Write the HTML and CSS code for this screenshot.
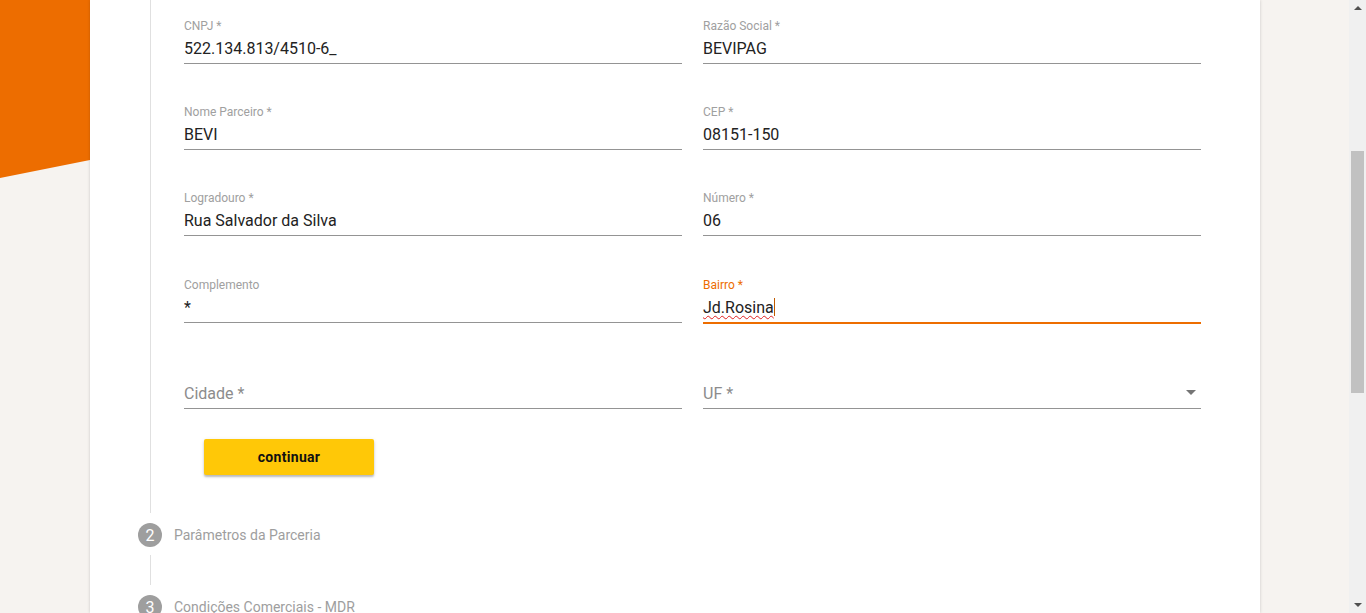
FILE: index.html
```html
<!DOCTYPE html>
<html lang="pt-BR">
<head>
<meta charset="utf-8">
<title>Cadastro de Parceiro</title>
<link rel="stylesheet" href="styles.css">
</head>
<body>
<div class="bg-shape"></div>
<div class="viewport">
  <div class="page">
    <div class="card">
      <div class="step-content">
        <form class="form-grid">
          <div class="field">
            <span class="label">CNPJ *</span>
            <span class="value">522.134.813/4510-6_</span>
          </div>
          <div class="field">
            <span class="label">Razão Social *</span>
            <span class="value">BEVIPAG</span>
          </div>
          <div class="field">
            <span class="label">Nome Parceiro *</span>
            <span class="value">BEVI</span>
          </div>
          <div class="field">
            <span class="label">CEP *</span>
            <span class="value">08151-150</span>
          </div>
          <div class="field">
            <span class="label">Logradouro *</span>
            <span class="value">Rua Salvador da Silva</span>
          </div>
          <div class="field">
            <span class="label">Número *</span>
            <span class="value">06</span>
          </div>
          <div class="field">
            <span class="label">Complemento</span>
            <span class="value">*</span>
          </div>
          <div class="field focused">
            <span class="label">Bairro *</span>
            <span class="value"><span class="misspelled">Jd.Rosina</span><span class="caret"></span></span>
          </div>
          <div class="field">
            <span class="label"></span>
            <span class="value placeholder">Cidade *</span>
          </div>
          <div class="field select">
            <span class="label"></span>
            <span class="value placeholder">UF *</span>
            <span class="arrow"></span>
          </div>
        </form>
        <div class="actions">
          <button class="btn-continue" type="button">continuar</button>
        </div>
      </div>
      <div class="step-header">
        <span class="step-num">2</span>
        <span class="step-title">Parâmetros da Parceria</span>
      </div>
      <div class="connector"></div>
      <div class="step-header">
        <span class="step-num">3</span>
        <span class="step-title">Condições Comerciais - MDR</span>
      </div>
    </div>
  </div>
  <div class="scrollbar">
    <span class="sb-arrow up"></span>
    <div class="sb-track"><div class="sb-thumb"></div></div>
    <span class="sb-arrow down"></span>
  </div>
</div>
</body>
</html>
```

FILE: styles.css
```css
* { box-sizing: border-box; }

html, body {
  margin: 0;
  height: 100%;
  overflow: hidden;
}

body {
  background: #f6f3f0;
  font-family: Roboto, "Liberation Sans", Arial, sans-serif;
  color: #212121;
}

.bg-shape {
  position: absolute;
  left: 0;
  top: 0;
  width: 100px;
  height: 178px;
  background: #ed6d00;
  clip-path: polygon(0 0, 100% 0, 100% 88.8%, 0 100%);
}

.viewport {
  position: relative;
  display: flex;
  height: 613px;
}

.page {
  flex: 1;
  padding-left: 90px;
  overflow: hidden;
}

.card {
  width: 1170px;
  height: 100%;
  background: #fff;
  box-shadow: 0 0 3px rgba(0, 0, 0, 0.18);
}

.step-content {
  margin-left: 60px;
  border-left: 1px solid #e0e0e0;
  padding: 19px 0 38px 33px;
}

.form-grid {
  display: grid;
  grid-template-columns: 498px 498px;
  grid-template-rows: 86px 86px 87px 86px 45px;
  column-gap: 21px;
  align-items: start;
  margin: 0;
}

.field {
  position: relative;
  display: flex;
  flex-direction: column;
  height: 45px;
  border-bottom: 1px solid #949494;
  padding-bottom: 4px;
}

.field .label {
  display: block;
  height: 14px;
  font-size: 12px;
  line-height: 14px;
  color: #a0a0a0;
}

.field .value {
  display: block;
  margin-top: 6px;
  font-size: 16px;
  line-height: 20px;
  height: 20px;
  color: #222;
  white-space: nowrap;
}

.field .placeholder {
  color: #8c8c8c;
}

.field.focused {
  border-bottom: 2px solid #ed6d00;
  padding-bottom: 3px;
  height: 46px;
}

.field.focused .label {
  color: #ed6d00;
}

.misspelled {
  text-decoration: underline wavy #e02020;
  text-decoration-thickness: 1px;
  text-underline-offset: 2px;
}

.caret {
  display: inline-block;
  width: 1px;
  height: 18px;
  vertical-align: -3px;
  background: #c05a00;
}

.field .arrow {
  position: absolute;
  right: 5px;
  bottom: 13px;
  width: 0;
  height: 0;
  border-left: 5px solid transparent;
  border-right: 5px solid transparent;
  border-top: 5px solid #757575;
}

.actions {
  padding: 30px 0 0 20px;
}

.btn-continue {
  width: 170px;
  height: 36px;
  border: none;
  border-radius: 2px;
  background: #ffc807;
  color: #111;
  font-family: Roboto, "Liberation Sans", Arial, sans-serif;
  font-size: 14px;
  font-weight: 700;
  letter-spacing: 0.3px;
  box-shadow: 0 2px 2px rgba(0, 0, 0, 0.22), 0 1px 4px rgba(0, 0, 0, 0.1);
  cursor: pointer;
}

.step-header {
  display: flex;
  align-items: center;
  height: 44px;
  padding-left: 48px;
  gap: 12px;
}

.step-num {
  display: flex;
  align-items: center;
  justify-content: center;
  width: 24px;
  height: 24px;
  border-radius: 50%;
  background: #9e9e9e;
  color: #fff;
  font-size: 16px;
}

.step-title {
  font-size: 14px;
  color: #9e9e9e;
}

.connector {
  margin-left: 60px;
  height: 30px;
  border-left: 1px solid #e0e0e0;
  margin-top: -2px;
}

.scrollbar {
  width: 17px;
  background: #f0f0f0;
  display: flex;
  flex-direction: column;
  align-items: center;
}

.sb-arrow {
  display: block;
  width: 0;
  height: 0;
  border-left: 4px solid transparent;
  border-right: 4px solid transparent;
}

.sb-arrow.up {
  margin-top: 6px;
  border-bottom: 4px solid #505050;
}

.sb-arrow.down {
  margin-bottom: 6px;
  border-top: 4px solid #505050;
}

.sb-track {
  flex: 1;
  width: 100%;
  padding: 0 2px;
}

.sb-thumb {
  margin-top: 141px;
  height: 242px;
  background: #c1c1c1;
}
```
